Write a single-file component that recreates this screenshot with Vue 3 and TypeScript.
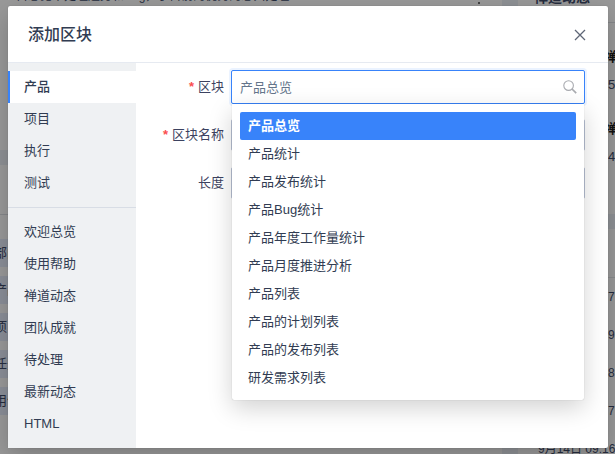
<script setup lang="ts">
import { ref } from 'vue'

interface Option {
  value: string
  label: string
}

const groups: string[][] = [
  ['产品', '项目', '执行', '测试'],
  ['欢迎总览', '使用帮助', '禅道动态', '团队成就', '待处理', '最新动态', 'HTML'],
]

const options: Option[] = [
  { value: 'overview', label: '产品总览' },
  { value: 'statistic', label: '产品统计' },
  { value: 'release-stat', label: '产品发布统计' },
  { value: 'bug-stat', label: '产品Bug统计' },
  { value: 'annual', label: '产品年度工作量统计' },
  { value: 'monthly', label: '产品月度推进分析' },
  { value: 'list', label: '产品列表' },
  { value: 'plans', label: '产品的计划列表' },
  { value: 'releases', label: '产品的发布列表' },
  { value: 'stories', label: '研发需求列表' },
]

const leftRows: string[] = ['部门', '产品', '项目', '任务', '用例']
const rightTimes: string[] = ['7', '9', '8', '7']

const activeModule = ref('产品')
const selected = ref('overview')
const name = ref('')
const width = ref('')
const open = ref(true)

function choose(option: Option): void {
  selected.value = option.value
}
</script>

<template>
  <div class="page">
    <div class="dashboard" aria-hidden="true">
      <div class="column main">
        <section class="panel intro">
          <p>目总览未处理趋势和Bug，了目前的优秀的总共处理</p>
          <i class="dot"></i>
        </section>
        <section class="panel chart"></section>
        <section class="panel tall">
          <ul class="strips">
            <li v-for="row in leftRows" :key="row">{{ row }}</li>
          </ul>
        </section>
      </div>
      <div class="column side">
        <section class="panel news">
          <h3>禅道动态</h3>
          <div class="entry"><b>禅道</b><span>5</span></div>
          <div class="entry"><b>禅道</b><span>4</span></div>
        </section>
        <section class="panel times">
          <div class="times-head"></div>
          <p v-for="(time, i) in rightTimes" :key="i">{{ time }}</p>
          <p class="date">9月14日 09:16</p>
        </section>
      </div>
    </div>

    <div class="backdrop">
      <div class="modal" role="dialog" aria-labelledby="modal-title">
        <header class="modal-head">
          <h1 id="modal-title">添加区块</h1>
          <button type="button" class="close" aria-label="关闭">
            <svg viewBox="0 0 12 12" width="12" height="12">
              <path d="M1 1L11 11M11 1L1 11" fill="none" stroke="currentColor" stroke-width="1.3" />
            </svg>
          </button>
        </header>
        <div class="modal-body">
          <nav class="side-nav">
            <ul v-for="(group, i) in groups" :key="i">
              <li v-for="item in group" :key="item">
                <a href="#" :class="{ active: item === activeModule }" @click.prevent="activeModule = item">{{ item }}</a>
              </li>
            </ul>
          </nav>
          <form class="form" @submit.prevent>
            <div class="row">
              <label for="block" class="required">区块</label>
              <div class="picker">
                <input id="block" class="search" type="text" placeholder="产品总览" autocomplete="off" @focus="open = true" />
                <svg class="glass" viewBox="0 0 14 14" width="14" height="14">
                  <circle cx="5.6" cy="5.6" r="4.8" fill="none" stroke="currentColor" stroke-width="1.1" />
                  <path d="M9 9L13.2 13.2" fill="none" stroke="currentColor" stroke-width="1.7" />
                </svg>
                <div v-if="open" class="menu" role="listbox" aria-label="区块">
                  <button
                    v-for="option in options"
                    :key="option.value"
                    type="button"
                    role="option"
                    :aria-selected="option.value === selected"
                    :class="{ selected: option.value === selected }"
                    @click="choose(option)"
                  >{{ option.label }}</button>
                </div>
              </div>
            </div>
            <div class="row">
              <label for="name" class="required">区块名称</label>
              <input id="name" v-model="name" type="text" />
            </div>
            <div class="row">
              <label for="width">长度</label>
              <input id="width" v-model="width" type="text" />
            </div>
          </form>
        </div>
      </div>
    </div>
  </div>
</template>

<style>
body {
  margin: 0;
  overflow: hidden;
}
</style>

<style scoped>
.page {
  position: relative;
  height: 100vh;
  overflow: hidden;
  background: #8e9195;
  color: #313c52;
  font-family: "Liberation Sans", "Noto Sans CJK SC", sans-serif;
  font-size: 13px;
  line-height: 20px;
}

ul,
h1,
h3,
p {
  margin: 0;
  padding: 0;
  list-style: none;
}

.dashboard {
  display: grid;
  grid-template-columns: minmax(0, 1fr) 97px;
  gap: 16px;
  height: 100%;
  overflow: hidden;
  color: #262d3f;
}

.column {
  display: flex;
  flex-direction: column;
  gap: 15px;
  min-width: 0;
}

.panel {
  flex: none;
  box-sizing: border-box;
  overflow: hidden;
  background: #999;
}

.intro {
  display: flex;
  justify-content: space-between;
  height: 150px;
  padding: 0 22px 0 16px;
}

.intro p {
  margin-top: -14px;
  font-size: 12px;
}

.dot {
  width: 2px;
  height: 2px;
  margin-top: 2px;
  background: #444;
}

.chart {
  height: 50px;
  border-bottom: 1px solid #85878a;
}

.tall {
  flex: 1;
  margin-top: -15px;
  padding-top: 24px;
}

.strips {
  display: flex;
  flex-direction: column;
  gap: 9px;
}

.strips li {
  box-sizing: border-box;
  height: 28px;
  padding-top: 4px;
  text-indent: -6px;
  background: #8b8f98;
}

.news {
  height: 214px;
}

.news h3 {
  height: 22px;
  margin-top: -13px;
  padding: 0 0 13px 16px;
  border-bottom: 1px solid #85878a;
  font-size: 14px;
}

.entry {
  display: grid;
  box-sizing: border-box;
  height: 72px;
  padding-top: 24px;
  padding-left: 90px;
  row-gap: 8px;
  white-space: nowrap;
}

.entry b {
  margin-left: -4px;
  color: #111;
}

.times {
  flex: 1;
}

.times-head {
  height: 48px;
  border-bottom: 1px solid #898b8d;
}

.times p {
  box-sizing: border-box;
  height: 38px;
  padding-top: 9px;
  padding-left: 90px;
  font-size: 12px;
}

.times .date {
  padding-left: 20px;
  white-space: nowrap;
}

.backdrop {
  position: absolute;
  inset: 0;
  display: flex;
  box-sizing: border-box;
  padding: 6px 7px 6px 8px;
}

.modal {
  display: flex;
  flex: 1;
  flex-direction: column;
  min-width: 0;
  border-radius: 2px;
  background: #fff;
  box-shadow: 0 0 1px rgba(0, 0, 0, 0.3), 0 8px 24px rgba(0, 0, 0, 0.2);
}

.modal-head {
  display: flex;
  align-items: center;
  justify-content: space-between;
  box-sizing: border-box;
  height: 57px;
  padding: 2px 20px 0;
  border-bottom: 1px solid #e6eaf1;
}

h1 {
  font-size: 16px;
  font-weight: 500;
  line-height: 24px;
}

.close {
  display: grid;
  place-items: center;
  width: 16px;
  height: 16px;
  padding: 0;
  border: 0;
  background: none;
  color: #5e6676;
}

.modal-body {
  display: flex;
  flex: 1;
}

.side-nav {
  width: 128px;
  background: #eff1f3;
}

.side-nav ul {
  padding: 8px 0;
}

.side-nav ul + ul {
  border-top: 1px solid #d8dde5;
}

.side-nav a {
  display: block;
  padding: 6px 14px;
  border-left: 2px solid transparent;
  color: inherit;
  text-decoration: none;
}

.side-nav .active {
  border-left-color: #3883fa;
  background: #fff;
  font-weight: 500;
}

.form {
  display: flex;
  flex: 1;
  flex-direction: column;
  gap: 16px;
  min-width: 0;
  padding: 8px 23px 8px 8px;
}

.row {
  display: grid;
  grid-template-columns: 80px minmax(0, 1fr);
  align-items: center;
  column-gap: 7px;
  height: 32px;
}

label {
  color: #3c4260;
  text-align: right;
}

.required::before {
  content: "*";
  margin-right: 4px;
  color: #fb4e4e;
  font-weight: 700;
}

input {
  box-sizing: border-box;
  width: 100%;
  height: 32px;
  padding: 0 8px;
  border: 1px solid #b9c2d6;
  border-radius: 2px;
  outline: none;
  background: #fff;
  color: inherit;
  font: inherit;
}

.picker {
  position: relative;
  margin: -1px 0;
}

.search {
  display: block;
  height: 34px;
  border-color: #3883fa;
  box-shadow: 0 0 0 2px #ebf3ff;
}

.search::placeholder {
  color: #64758b;
  opacity: 1;
}

.glass {
  position: absolute;
  top: 10px;
  right: 8px;
  color: #a9abb0;
}

.menu {
  position: absolute;
  z-index: 2;
  top: 100%;
  right: 1px;
  left: 1px;
  display: grid;
  padding: 8px;
  border-radius: 0 0 2px 2px;
  background: #fff;
  box-shadow: 0 0 1px rgba(0, 0, 0, 0.3), 0 8px 24px rgba(0, 0, 0, 0.18);
}

.menu button {
  height: 28px;
  padding: 0 8px;
  border: 0;
  border-radius: 2px;
  background: none;
  color: inherit;
  font: inherit;
  text-align: left;
}

.menu .selected {
  background: #3883fa;
  color: #fff;
  font-weight: 700;
}
</style>
